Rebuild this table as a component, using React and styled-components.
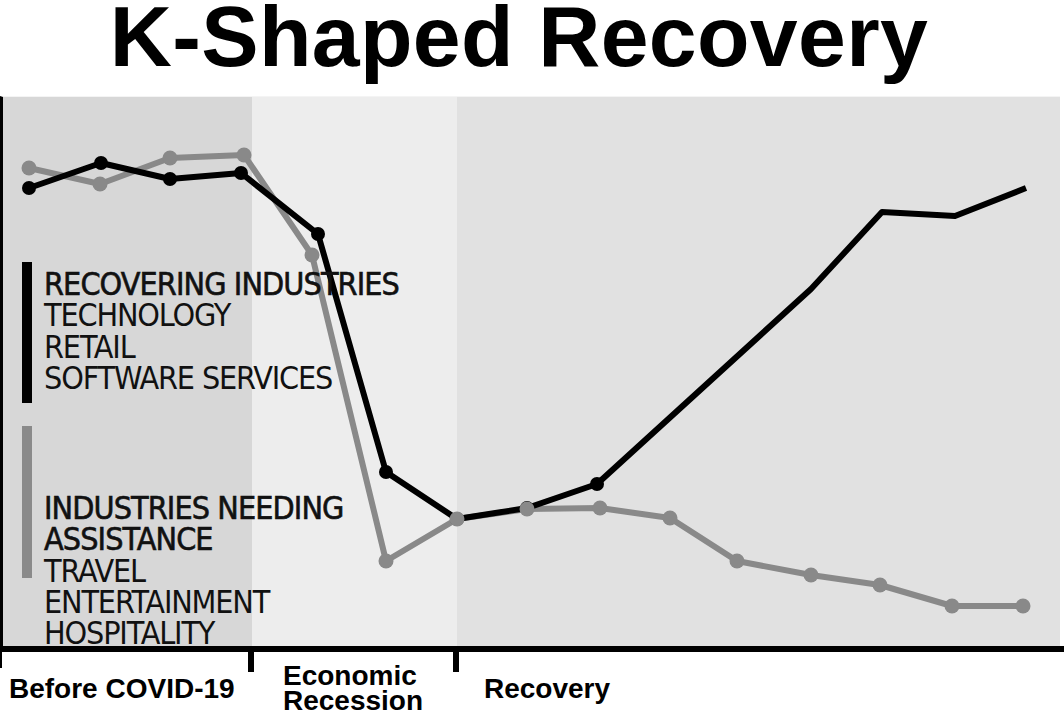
import React from "react";
import styled, { createGlobalStyle } from "styled-components";

const Global = createGlobalStyle`
  html, body { margin: 0; padding: 0; background: #fff; }
  body { font-family: "Liberation Sans", Arial, sans-serif; }
`;

const Page = styled.div`
  width: 1064px;
  height: 714px;
  overflow: hidden;
  background: #fff;
`;

const Title = styled.h1`
  margin: 0;
  height: 96px;
  padding-right: 26px;
  font: 700 86px/72px "Liberation Sans", Arial, sans-serif;
  letter-spacing: 0.35px;
  text-align: center;
  color: #000;
`;

const ChartArea = styled.div`
  position: relative;
  width: 1064px;
  height: 550px;
  overflow: hidden;
`;

const Bands = styled.div`
  display: flex;
  width: 1060px;
  height: 100%;
  box-sizing: border-box;
  border-left: 3px solid #000;
  border-top: 1px solid #f4f4f4;
`;

const Band = styled.div`
  flex: 0 0 ${(p) => p.$w}px;
  background: ${(p) => p.$bg};
`;

const Plot = styled.svg`
  position: absolute;
  left: 0;
  top: 0;
`;

const Legend = styled.div`
  position: absolute;
  left: 22px;
  top: 166px;
  display: flex;
  flex-direction: column;
  gap: 23px;
`;

const LegendGroup = styled.div`
  display: flex;
  align-items: flex-start;
  gap: 12px;
`;

const Swatch = styled.div`
  flex: none;
  width: 10px;
  height: ${(p) => p.$h}px;
  background: ${(p) => p.$color};
`;

const LegendText = styled.div`
  padding-top: ${(p) => p.$top}px;
  font: 400 32px/31.3px "Liberation Sans Narrow", "DejaVu Sans Condensed", "Open Sans", sans-serif;
  letter-spacing: -1.15px;
  color: #111;
  white-space: nowrap;
`;

const LegendHeading = styled.div`
  letter-spacing: -0.9px;
  -webkit-text-stroke: 0.6px #111;
`;

const Axis = styled.div`
  height: 6px;
  background: #000;
`;

const AxisLabels = styled.div`
  display: grid;
  grid-template-columns: 251px 205px 1fr;
  height: 62px;
`;

const Segment = styled.div`
  display: flex;
  align-items: flex-start;
`;

const Tick = styled.div`
  flex: none;
  width: ${(p) => p.$w}px;
  height: ${(p) => p.$h}px;
  margin-left: ${(p) => p.$offset}px;
  background: #000;
`;

const PhaseLabel = styled.div`
  margin-left: ${(p) => p.$indent}px;
  padding-top: ${(p) => p.$top}px;
  font: 700 28px/${(p) => p.$lh}px "Liberation Sans", Arial, sans-serif;
  color: #000;
  white-space: nowrap;
`;

const gray = [
  [29, 168], [100, 184], [170, 158], [244, 155], [312, 255], [386, 561],
  [457, 519], [527, 509], [600, 508], [670, 518], [737, 561], [811, 575],
  [880, 585], [952, 606], [1023, 606],
];
const black = [
  [29, 188], [101, 163], [170, 179], [241, 173], [318, 234], [386, 472],
  [457, 519], [527, 508], [597, 484], [811, 289], [882, 212], [955, 216], [1026, 188],
];
const pts = (a) => a.map(([x, y]) => `${x},${y}`).join(" ");

const GRAY = "#898989";

export default function App() {
  return (
    <Page>
      <Global />
      <Title>K-Shaped Recovery</Title>
      <ChartArea>
        <Bands>
          <Band $w={249} $bg="#d7d7d7" />
          <Band $w={205} $bg="#ededed" />
          <Band $w={603} $bg="#e1e1e1" />
        </Bands>
        <Plot width="1064" height="550" viewBox="0 96 1064 550">
          <polyline points={pts(gray)} fill="none" stroke={GRAY} strokeWidth="6" strokeLinejoin="round" />
          {gray.slice(0, 6).map(([x, y]) => (
            <circle key={`g${x}`} cx={x} cy={y} r="7.5" fill={GRAY} />
          ))}
          <polyline points={pts(black)} fill="none" stroke="#000" strokeWidth="6" strokeLinejoin="round" />
          {black.slice(0, 9).map(([x, y]) => (
            <circle key={`b${x}`} cx={x} cy={y} r="7" fill="#000" />
          ))}
          {gray.slice(6).map(([x, y]) => (
            <circle key={`g2${x}`} cx={x} cy={y} r="7.5" fill={GRAY} />
          ))}
        </Plot>
        <Legend>
          <LegendGroup>
            <Swatch $h={141} $color="#000" />
            <LegendText $top={7}>
              <LegendHeading>RECOVERING INDUSTRIES</LegendHeading>
              <div>TECHNOLOGY</div>
              <div>RETAIL</div>
              <div>SOFTWARE SERVICES</div>
            </LegendText>
          </LegendGroup>
          <LegendGroup>
            <Swatch $h={152} $color="#8a8a8a" />
            <LegendText $top={67}>
              <LegendHeading>INDUSTRIES NEEDING</LegendHeading>
              <LegendHeading>ASSISTANCE</LegendHeading>
              <div>TRAVEL</div>
              <div>ENTERTAINMENT</div>
              <div>HOSPITALITY</div>
            </LegendText>
          </LegendGroup>
        </Legend>
      </ChartArea>
      <Axis />
      <AxisLabels>
        <Segment>
          <Tick $w={2} $h={16} $offset={0} />
          <PhaseLabel $indent={7} $top={24} $lh={26}>Before COVID-19</PhaseLabel>
        </Segment>
        <Segment>
          <Tick $w={6} $h={20} $offset={-3} />
          <PhaseLabel $indent={29} $top={11} $lh={25}>
            Economic
            <br />
            Recession
          </PhaseLabel>
        </Segment>
        <Segment>
          <Tick $w={6} $h={20} $offset={-3} />
          <PhaseLabel $indent={25} $top={24} $lh={26}>Recovery</PhaseLabel>
        </Segment>
      </AxisLabels>
    </Page>
  );
}
